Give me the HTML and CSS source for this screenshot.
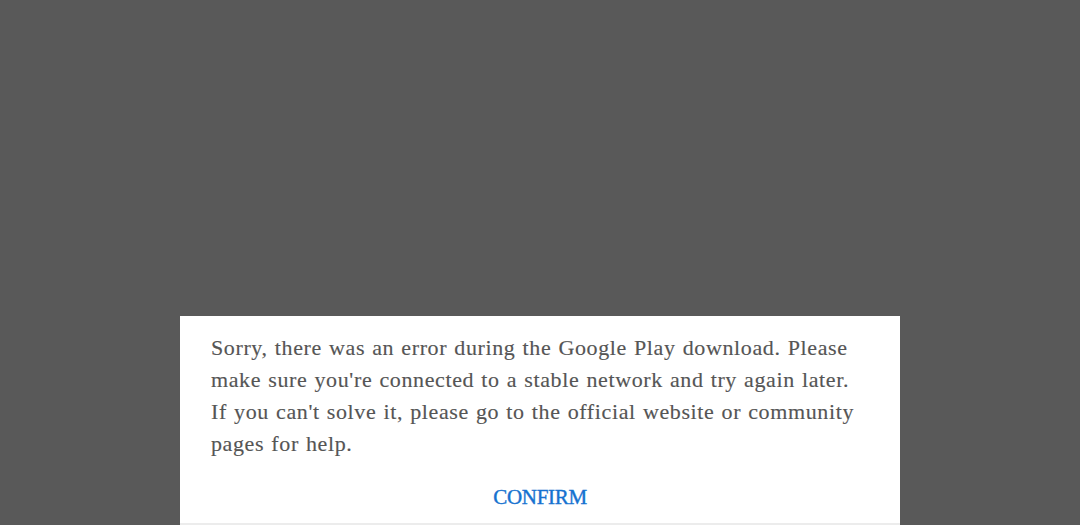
FILE: index.html
```html
<!DOCTYPE html>
<html>
<head>
<meta charset="utf-8">
<link rel="stylesheet" href="styles.css">
</head>
<body>
<div class="screen">
  <div class="dialog">
    <p class="message">Sorry, there was an error during the Google Play download. Please make sure you're connected to a stable network and try again later. If you can't solve it, please go to the official website or community pages for help.</p>
    <div class="actions"><span class="confirm">CONFIRM</span></div>
  </div>
</div>
</body>
</html>
```
FILE: styles.css
```css
html, body {
  margin: 0;
  padding: 0;
}
body {
  background: #595959;
  font-family: "Liberation Serif", "DejaVu Serif", serif;
}
.screen {
  width: 1080px;
  height: 525px;
  display: flex;
  flex-direction: column;
  justify-content: flex-end;
  align-items: center;
  overflow: hidden;
}
.dialog {
  width: 720px;
  height: 209px;
  background: #ffffff;
  box-sizing: border-box;
  padding: 16px 34px 0 31px;
  border-bottom: 2px solid #ececec;
  display: flex;
  flex-direction: column;
}
.message {
  margin: 0;
  font-size: 22px;
  line-height: 32px;
  color: #555555;
  letter-spacing: 0.62px;
  word-spacing: 1px;
  -webkit-text-stroke: 0.15px #555555;
}
.actions {
  margin-top: 24px;
  margin-right: -3px;
  display: flex;
  justify-content: center;
}
.confirm {
  font-size: 21px;
  line-height: 26px;
  color: #1672d0;
  letter-spacing: -0.3px;
  -webkit-text-stroke: 0.4px #1672d0;
}
```
